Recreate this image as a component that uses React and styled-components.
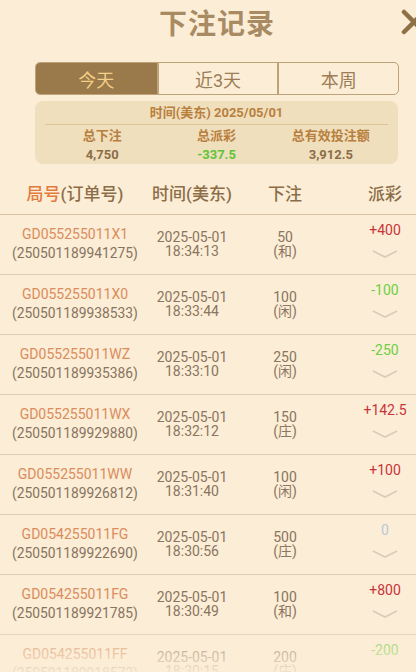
import React from "react"
import styled, { createGlobalStyle } from "styled-components"

const GlobalStyle = createGlobalStyle`
  html, body {
    margin: 0;
    padding: 0;
    background: #fbedd6;
    overflow: hidden;
  }
  body {
    font-family: Roboto, "Noto Sans CJK SC", sans-serif;
  }
`

const Page = styled.div`
  position: relative;
  width: 416px;
  height: 672px;
  overflow: hidden;
  background: #fbedd6;
`

const TitleBar = styled.div`
  position: relative;
  height: 48px;
  display: flex;
  align-items: center;
  justify-content: center;
  padding-left: 18px;
  box-sizing: border-box;
`

const Title = styled.h1`
  margin: 0;
  margin-top: -4px;
  font-size: 28px;
  font-weight: 700;
  color: #a88b63;
  letter-spacing: 1px;
`

const CloseButton = styled.div`
  position: absolute;
  right: -12px;
  top: 8px;
  width: 28px;
  height: 28px;
`

const Tabs = styled.div`
  margin: 14px 17px 0 35px;
  height: 33px;
  display: grid;
  grid-template-columns: 1fr 1fr 1fr;
  border: 1px solid #bea27a;
  border-radius: 5px;
  overflow: hidden;
  box-sizing: border-box;
`

const Tab = styled.div`
  display: flex;
  align-items: center;
  justify-content: center;
  font-size: 18px;
  color: ${p => (p.$active ? "#f3cf88" : "#9d7d58")};
  background: ${p => (p.$active ? "#9a7a4b" : "transparent")};
  & + & {
    border-left: 2px solid #bea27a;
  }
`

const Summary = styled.div`
  margin: 6px 18px 0 35px;
  height: 63px;
  background: #f0dfbd;
  border-radius: 8px;
  padding: 4px 10px 0;
  box-sizing: border-box;
`

const SummaryDate = styled.div`
  text-align: center;
  font-size: 13px;
  font-weight: 700;
  color: #b8803f;
  line-height: 16px;
  padding-bottom: 3px;
  border-bottom: 1px solid #dcc497;
`

const SummaryGrid = styled.div`
  display: grid;
  grid-template-columns: 1fr 1fr 1fr;
  padding-top: 1px;
`

const SummaryCell = styled.div`
  display: flex;
  flex-direction: column;
  align-items: center;
  font-size: 13px;
  font-weight: 700;
  line-height: 19px;
`

const SummaryLabel = styled.span`
  color: #b8803f;
`

const SummaryValue = styled.span`
  color: ${p => p.$color || "#8c6d48"};
`

const HeaderRow = styled.div`
  display: grid;
  grid-template-columns: 150px 84px 102px 1fr;
  height: 45px;
  margin-top: 6px;
  align-items: center;
  border-bottom: 1px solid #d8c3a3;
  font-size: 17px;
  font-weight: 500;
  color: #8c6d48;
  padding-top: 1px;
  box-sizing: border-box;
`

const HeaderCell = styled.div`
  text-align: center;
  padding-left: ${p => p.$pad || 0}px;
`

const Accent = styled.span`
  color: #e27b3e;
`

const Row = styled.div`
  display: grid;
  grid-template-columns: 150px 84px 102px 1fr;
  height: 60px;
  border-bottom: 1px solid #ddcdb5;
  box-sizing: border-box;
`

const IdCell = styled.div`
  display: flex;
  flex-direction: column;
  justify-content: center;
  align-items: center;
  font-size: 14px;
  line-height: 19px;
  padding-bottom: 1px;
`

const GameId = styled.span`
  color: #da8c5c;
`

const OrderId = styled.span`
  color: #88735e;
  font-size: 13.8px;
`

const StackCell = styled.div`
  display: flex;
  flex-direction: column;
  justify-content: center;
  align-items: center;
  font-size: 14px;
  line-height: 14px;
  color: #8a7560;
  padding-bottom: 1px;
`

const PayCell = styled.div`
  display: flex;
  flex-direction: column;
  align-items: center;
  padding-left: 18px;
  padding-top: 7px;
  font-size: 14px;
`

const PayValue = styled.span`
  line-height: 16px;
  color: ${p => p.$color};
`

const Chevron = styled.svg`
  margin-top: 12px;
  width: 26px;
  height: 8px;
`

const Fade = styled.div`
  position: absolute;
  left: 0;
  right: 0;
  bottom: 0;
  height: 44px;
  pointer-events: none;
  background: linear-gradient(
    to bottom,
    rgba(251, 237, 214, 0.15),
    rgba(251, 237, 214, 0.9)
  );
`

const rows = [
  ["GD055255011X1", "250501189941275", "18:34:13", "50", "和", "+400"],
  ["GD055255011X0", "250501189938533", "18:33:44", "100", "闲", "-100"],
  ["GD055255011WZ", "250501189935386", "18:33:10", "250", "闲", "-250"],
  ["GD055255011WX", "250501189929880", "18:32:12", "150", "庄", "+142.5"],
  ["GD055255011WW", "250501189926812", "18:31:40", "100", "闲", "+100"],
  ["GD054255011FG", "250501189922690", "18:30:56", "500", "庄", "0"],
  ["GD054255011FG", "250501189921785", "18:30:49", "100", "和", "+800"],
  ["GD054255011FF", "250501189918572", "18:30:15", "200", "庄", "-200"],
]

const payColor = v => {
  if (v.startsWith("+")) return "#c8333b"
  if (v.startsWith("-")) return "#6fcf45"
  return "#b9c6d6"
}

export default function App() {
  return (
    <Page>
      <GlobalStyle />
      <TitleBar>
        <Title>下注记录</Title>
        <CloseButton>
          <svg width="28" height="28" viewBox="0 0 28 28">
            <path
              d="M4 4 L24 24 M24 4 L4 24"
              stroke="#8f7047"
              strokeWidth="4.5"
              strokeLinecap="round"
            />
          </svg>
        </CloseButton>
      </TitleBar>

      <Tabs>
        <Tab $active>今天</Tab>
        <Tab>近3天</Tab>
        <Tab>本周</Tab>
      </Tabs>

      <Summary>
        <SummaryDate>时间(美东) 2025/05/01</SummaryDate>
        <SummaryGrid>
          <SummaryCell>
            <SummaryLabel>总下注</SummaryLabel>
            <SummaryValue>4,750</SummaryValue>
          </SummaryCell>
          <SummaryCell>
            <SummaryLabel>总派彩</SummaryLabel>
            <SummaryValue $color="#5ec43a">-337.5</SummaryValue>
          </SummaryCell>
          <SummaryCell>
            <SummaryLabel>总有效投注额</SummaryLabel>
            <SummaryValue>3,912.5</SummaryValue>
          </SummaryCell>
        </SummaryGrid>
      </Summary>

      <HeaderRow>
        <HeaderCell>
          <Accent>局号</Accent>(订单号)
        </HeaderCell>
        <HeaderCell>时间(美东)</HeaderCell>
        <HeaderCell>下注</HeaderCell>
        <HeaderCell $pad={18}>派彩</HeaderCell>
      </HeaderRow>

      {rows.map((r, i) => (
        <Row key={i}>
          <IdCell>
            <GameId>{r[0]}</GameId>
            <OrderId>({r[1]})</OrderId>
          </IdCell>
          <StackCell>
            <span>2025-05-01</span>
            <span>{r[2]}</span>
          </StackCell>
          <StackCell>
            <span>{r[3]}</span>
            <span>({r[4]})</span>
          </StackCell>
          <PayCell>
            <PayValue $color={payColor(r[5])}>{r[5]}</PayValue>
            <Chevron viewBox="0 0 26 8">
              <path
                d="M1 1 L13 7 L25 1"
                fill="none"
                stroke="#d9ccbc"
                strokeWidth="1.8"
              />
            </Chevron>
          </PayCell>
        </Row>
      ))}
      <Fade />
    </Page>
  )
}
